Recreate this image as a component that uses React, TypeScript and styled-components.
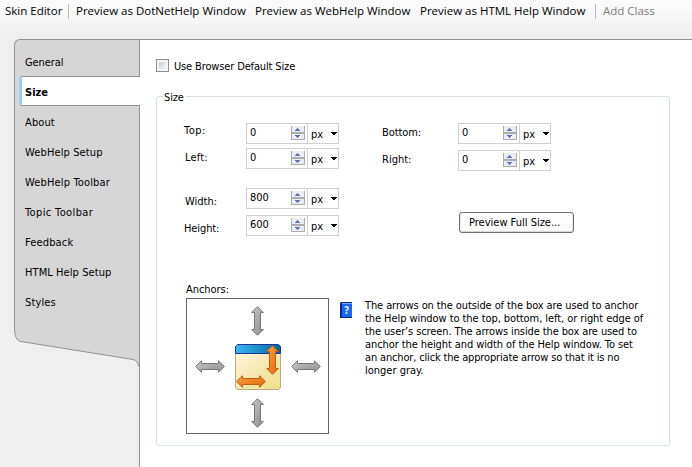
import React from "react";
import styled, { createGlobalStyle } from "styled-components";

const GlobalStyle = createGlobalStyle`
  * { box-sizing: border-box; }
  html, body { margin: 0; padding: 0; }
  body {
    background: #efefef;
    overflow: hidden;
    color: #000;
    font: 11px/13px "DejaVu Sans Condensed", "DejaVu Sans", sans-serif;
    white-space: nowrap;
  }
`;

const Window = styled.div`
  display: flex;
  flex-direction: column;
  width: 692px;
  height: 467px;
`;

const Toolbar = styled.header`
  display: flex;
  flex: none;
  align-items: flex-start;
  height: 39px;
  padding: 3px 0 0 5px;
  background: linear-gradient(#fcfcfc 0, #f7f7f7 14px, #efefef 34px);
  font: 11.5px/16px "Open Sans", "Noto Sans", sans-serif;
`;

const ToolItem = styled.span<{ $width: number; $disabled?: boolean }>`
  flex: none;
  width: ${(p) => p.$width}px;
  color: ${(p) => (p.$disabled ? "#7b7b7b" : "#000")};
`;

const ToolDivider = styled.i`
  flex: none;
  width: 1px;
  height: 15px;
  margin: 1px 7px 0 0;
  background: #b9b9b9;
`;

const Body = styled.div`
  display: flex;
  flex: 1;
`;

const Side = styled.aside`
  flex: none;
  width: 125px;
  margin-left: 14px;
`;

const Nav = styled.nav`
  height: 290px;
  padding-top: 6px;
  background: #d6d6d6;
  border: solid #919191;
  border-width: 1px 0 0 1px;
  border-top-left-radius: 6px;
`;

const Tab = styled.div<{ $spacing?: number }>`
  height: 30px;
  padding: 10px 0 0 10px;
  letter-spacing: ${(p) => p.$spacing ?? 0.12}px;
`;

const ActiveTab = styled(Tab)`
  position: relative;
  margin: 0 -1px 0 4px;
  padding: 9px 0 0 3px;
  background: #fff;
  border: solid #919191;
  border-width: 1px 0;
  border-left: 3px solid #99ccff;
  border-radius: 3px 0 0 3px;
  font-weight: bold;
`;

const NavFoot = styled.svg`
  display: block;
`;

const Main = styled.main`
  flex: 1;
  padding: 20px 0 0 16px;
  background: #fff;
  border: solid #919191;
  border-width: 1px 0 0 1px;
`;

const CheckRow = styled.label`
  display: flex;
  height: 13px;
  margin-bottom: 14px;
  gap: 5px;
  letter-spacing: -0.14px;
`;

const CheckBox = styled.span`
  width: 13px;
  height: 13px;
  margin-top: -1px;
  border: 1px solid #8e8f8f;
  background: linear-gradient(135deg, #cbcfd5, #f6f6f6) content-box, #f4f4f4;
  padding: 2px;
`;

const Group = styled.section`
  width: 514px;
  height: 350px;
  margin-top: 23px;
  border: 1px solid #d5dfe5;
  border-radius: 3px;
`;

const Legend = styled.h2`
  width: 23px;
  height: 13px;
  margin: -6px 0 0 6px;
  padding-left: 1px;
  background: #fff;
  font-size: 11px;
  font-weight: normal;
  letter-spacing: -0.15px;
`;

const Fields = styled.div`
  display: flex;
  height: 149px;
  padding-top: 19px;
`;

const Column = styled.div<{ $left: number; $labels: number }>`
  margin-left: ${(p) => p.$left}px;
  display: grid;
  grid-template-columns: ${(p) => p.$labels}px 93px;
  align-content: start;
`;

const Label = styled.span<{ $top: number; $indent?: number; $spacing?: number }>`
  padding: ${(p) => p.$top}px 0 0 ${(p) => p.$indent ?? 0}px;
  letter-spacing: ${(p) => p.$spacing ?? 0}px;
`;

const Field = styled.div<{ $gap: number }>`
  display: flex;
  height: 21px;
  margin-bottom: ${(p) => p.$gap}px;
  border: 1px solid #d0d0d0;
`;

const Value = styled.span`
  width: 44px;
  padding: 2px 0 0 3px;
`;

const SpinnerSvg = styled.svg`
  display: block;
  margin: 2px 2px 0 0;
`;

const Unit = styled.span`
  display: flex;
  flex: 1;
  justify-content: space-between;
  padding: 4px 1px 0 3px;
  border-left: 1px solid #d0d0d0;
`;

const Caret = styled.svg`
  display: block;
  margin-top: 4px;
`;

const Button = styled.button`
  width: 115px;
  height: 21px;
  margin: 41px 0 0 120px;
  padding: 0;
  border: 1px solid #707070;
  border-radius: 3px;
  background: linear-gradient(#fefefe, #fbfbfb);
  box-shadow: inset 1px 0 #e8e8e8, inset -1px 0 #e8e8e8, inset 0 -1px #d8d8d8;
  color: #000;
  font: inherit;
  line-height: 17px;
  text-align: left;
  text-indent: 9px;
`;

const AnchorLabel = styled.div`
  margin: 30px 0 2px 29px;
  letter-spacing: -0.05px;
`;

const AnchorRow = styled.div`
  display: flex;
  align-items: flex-start;
  padding-left: 29px;
`;

const AnchorBox = styled.div`
  width: 143px;
  height: 136px;
  border: 1px solid #666;
`;

const Diagram = styled.svg`
  display: block;
`;

const HelpIcon = styled.svg`
  display: block;
  margin: 4px 13px 0 11px;
`;

const Note = styled.p`
  margin: 1px 0 0;
`;

const Line = styled.span<{ $spacing: number }>`
  display: block;
  letter-spacing: ${(p) => p.$spacing}px;
`;

const noteLines: [string, number][] = [
  ["The arrows on the outside of the box are used to anchor", -0.1],
  ["the Help window to the top, bottom, left, or right edge of", -0.07],
  ["the user’s screen. The arrows inside the box are used to", -0.11],
  ["anchor the height and width of the Help window. To set", -0.09],
  ["an anchor, click the appropriate arrow so that it is no", -0.16],
  ["longer gray.", 0],
];

function Spinner() {
  return (
    <SpinnerSvg width="14" height="14" shapeRendering="crispEdges">
      <rect x="1" width="12" height="13" fill="#ededf0" />
      <path d="M0 0h1v14H0zM13 0h1v14h-1zM0 6h14v2H0zM0 13h14v1H0z" fill="#ababb0" />
      <path d="M6 2h1v1h1v1h1v1H4V4h1V3h1zM4 9h5v1H8v1H7v1H6v-1H5v-1H4z" fill="#5873c0" />
    </SpinnerSvg>
  );
}

function SizeField({ value, gap }: { value: string; gap: number }) {
  return (
    <Field $gap={gap}>
      <Value>{value}</Value>
      <Spinner />
      <Unit>
        px
        <Caret width="6" height="3" shapeRendering="crispEdges">
          <path d="M0 0h6v1H5v1H4v1H2V2H1V1H0z" />
        </Caret>
      </Unit>
    </Field>
  );
}

/** Double-headed arrow, 13 by 30, drawn upright or turned on its side. */
function Arrow({ x, y, side, active }: { x: number; y: number; side?: boolean; active?: boolean }) {
  const turn = side ? " matrix(0 1 1 0 0 0)" : "";
  return (
    <path
      transform={`translate(${x} ${y})${turn}`}
      d="M6.5 .7L12.3 6.5H9.5V23.5H12.3L6.5 29.3L.7 23.5H3.5V6.5H.7Z"
      fill={active ? "url(#orange)" : "url(#gray)"}
      stroke={active ? "#c75a0c" : "#777"}
    />
  );
}

function AnchorDiagram() {
  return (
    <Diagram width="141" height="134">
      <defs>
        <linearGradient id="gray" x1="0" y1="0" x2="1" y2="1">
          <stop stopColor="#c8c8c8" />
          <stop offset="1" stopColor="#8d8d8d" />
        </linearGradient>
        <linearGradient id="orange" x1="0" y1="0" x2="1" y2="1">
          <stop stopColor="#ffa047" />
          <stop offset="1" stopColor="#dc6a08" />
        </linearGradient>
        <linearGradient id="title">
          <stop stopColor="#3bb8f4" />
          <stop offset="1" stopColor="#05659e" />
        </linearGradient>
        <linearGradient id="paper" x1="0" y1="0" x2="1" y2="1">
          <stop stopColor="#fff3dc" />
          <stop offset="1" stopColor="#ebdf85" />
        </linearGradient>
      </defs>
      <path d="M48.5 54.5h45v34l-2 2h-41l-2-2z" fill="url(#paper)" stroke="#b5ad84" />
      <path d="M48.5 54.5v-7l2-2h41l2 2v7z" fill="url(#title)" stroke="#21309a" />
      <Arrow x={64} y={7} />
      <Arrow x={64} y={99} />
      <Arrow x={8} y={61} side />
      <Arrow x={104} y={61} side />
      <Arrow x={79} y={46} active />
      <Arrow x={49} y={76} side active />
    </Diagram>
  );
}

export default function App() {
  return (
    <>
      <GlobalStyle />
      <Window>
        <Toolbar>
          <ToolItem $width={63}>Skin Editor</ToolItem>
          <ToolDivider />
          <ToolItem $width={179}>Preview as DotNetHelp Window</ToolItem>
          <ToolItem $width={165}>Preview as WebHelp Window</ToolItem>
          <ToolItem $width={175}>Preview as HTML Help Window</ToolItem>
          <ToolDivider />
          <ToolItem $width={60} $disabled>Add Class</ToolItem>
        </Toolbar>
        <Body>
          <Side>
            <Nav>
              <Tab $spacing={-0.1}>General</Tab>
              <ActiveTab $spacing={0}>Size</ActiveTab>
              <Tab>About</Tab>
              <Tab>WebHelp Setup</Tab>
              <Tab $spacing={0.15}>WebHelp Toolbar</Tab>
              <Tab $spacing={0.38}>Topic Toolbar</Tab>
              <Tab $spacing={0.15}>Feedback</Tab>
              <Tab $spacing={0.08}>HTML Help Setup</Tab>
              <Tab>Styles</Tab>
            </Nav>
            <NavFoot width="125" height="38">
              <path
                d="M.5 -1C.5 7 2.5 12 7 12.5L119 30.5Q124 31.5 124.5 37L126 37V-1Z"
                fill="#d6d6d6"
                stroke="#919191"
              />
            </NavFoot>
          </Side>
          <Main>
            <CheckRow>
              <CheckBox />
              Use Browser Default Size
            </CheckRow>
            <Group>
              <Legend>Size</Legend>
              <Fields>
                <Column $left={27} $labels={62}>
                  <Label $top={1} $spacing={0.5}>Top:</Label>
                  <SizeField value="0" gap={4} />
                  <Label $top={3} $indent={1} $spacing={0.2}>Left:</Label>
                  <SizeField value="0" gap={19} />
                  <Label $top={7} $indent={1}>Width:</Label>
                  <SizeField value="800" gap={6} />
                  <Label $top={7} $spacing={-0.1}>Height:</Label>
                  <SizeField value="600" gap={0} />
                </Column>
                <div>
                  <Column $left={42} $labels={77}>
                    <Label $top={3} $indent={1} $spacing={-0.1}>Bottom:</Label>
                    <SizeField value="0" gap={6} />
                    <Label $top={3} $indent={1}>Right:</Label>
                    <SizeField value="0" gap={0} />
                  </Column>
                  <Button>Preview Full Size...</Button>
                </div>
              </Fields>
              <AnchorLabel>Anchors:</AnchorLabel>
              <AnchorRow>
                <AnchorBox>
                  <AnchorDiagram />
                </AnchorBox>
                <HelpIcon width="12" height="16">
                  <path d="M1 1h11v15H1z" fill="#1668f5" />
                  <path d="M0 1L1 0h11v1H2v14h10v1H0z" fill="#0b2b86" />
                  <path d="M2 1h10v1H2z" fill="#7aa6f4" />
                  <text x="4" y="12" fill="#e4efff" fontSize="10" fontWeight="bold">?</text>
                </HelpIcon>
                <Note>
                  {noteLines.map(([text, spacing]) => (
                    <Line key={text} $spacing={spacing}>{text}</Line>
                  ))}
                </Note>
              </AnchorRow>
            </Group>
          </Main>
        </Body>
      </Window>
    </>
  );
}
